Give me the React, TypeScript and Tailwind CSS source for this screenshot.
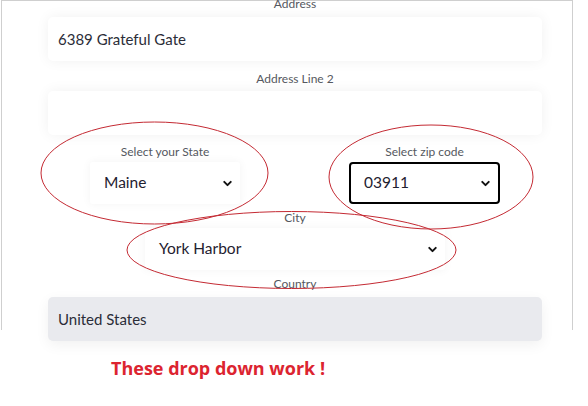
import { ChevronDown } from "lucide-react";

const font = { fontFamily: "Lato, 'Open Sans', sans-serif" };

function Label({ text, className = "" }: { text: string; className?: string }) {
  return (
    <div className={`text-center text-[12px] leading-[17px] text-[#555860] ${className}`}>
      {text}
    </div>
  );
}

function Select({ value, width, boxed = false }: { value: string; width: string; boxed?: boolean }) {
  return (
    <div
      className={`flex h-[42px] items-center justify-between bg-white text-[15.5px] text-[#1f2130] ${width} ${
        boxed
          ? "rounded-[4px] border-2 border-black pl-[13px] pr-[6px]"
          : "rounded-[3px] pl-[14px] pr-[6px] shadow-[0_0_10px_rgba(0,0,0,0.05)]"
      }`}
    >
      <span>{value}</span>
      <ChevronDown size={13} strokeWidth={3.6} className="text-[#111]" />
    </div>
  );
}

export default function App() {
  return (
    <div className="relative min-h-[406px] w-[588px] bg-white" style={font}>
      <div className="ml-px h-[330px] w-[572px] border-x border-t border-[#cfcfcf] pl-[46px]">
        <div className="w-[494px]">
          <Label text="Address" className="-mt-[6px] mb-[5px]" />
          <div className="flex h-[44px] items-center rounded-[5px] bg-white pl-[10px] text-[15px] text-[#2b2d38] shadow-[0_0_14px_rgba(0,0,0,0.06)]">
            6389 Grateful Gate
          </div>

          <Label text="Address Line 2" className="mt-[9px] mb-[4px]" />
          <div className="h-[44px] rounded-[5px] bg-white shadow-[0_0_14px_rgba(0,0,0,0.06)]" />

          <div className="mt-[8px] flex justify-between px-[42px]">
            <div>
              <Label text="Select your State" className="mb-[2px]" />
              <Select value="Maine" width="w-[150px]" />
            </div>
            <div>
              <Label text="Select zip code" className="mb-[2px]" />
              <Select value="03911" width="w-[151px]" boxed />
            </div>
          </div>

          <Label text="City" className="mt-[5px] mb-[2px]" />
          <div className="flex justify-center">
            <Select value="York Harbor" width="w-[300px]" />
          </div>

          <Label text="Country" className="mt-[5px] mb-[5px]" />
          <div className="flex h-[44px] items-center rounded-[5px] bg-[#e9eaee] pl-[10px] text-[15px] text-[#2b2d38] shadow-[0_4px_14px_rgba(0,0,0,0.06)]">
            United States
          </div>
        </div>
      </div>

      <p
        className="mt-[26px] pl-[111px] text-[18px] font-bold leading-[24px] text-[#dc2430]"
        style={{ fontFamily: "'Open Sans', sans-serif" }}
      >
        These drop down work !
      </p>

      {/* red hand-drawn annotation circles */}
      <svg className="pointer-events-none absolute left-0 top-0" width="588" height="406">
        <g fill="none" stroke="#c42a33" strokeWidth="1">
          <ellipse cx="154.5" cy="173" rx="113.5" ry="51" />
          <ellipse cx="431" cy="177" rx="102" ry="52" />
          <ellipse cx="291.5" cy="250" rx="164.5" ry="38.5" />
        </g>
      </svg>
    </div>
  );
}
